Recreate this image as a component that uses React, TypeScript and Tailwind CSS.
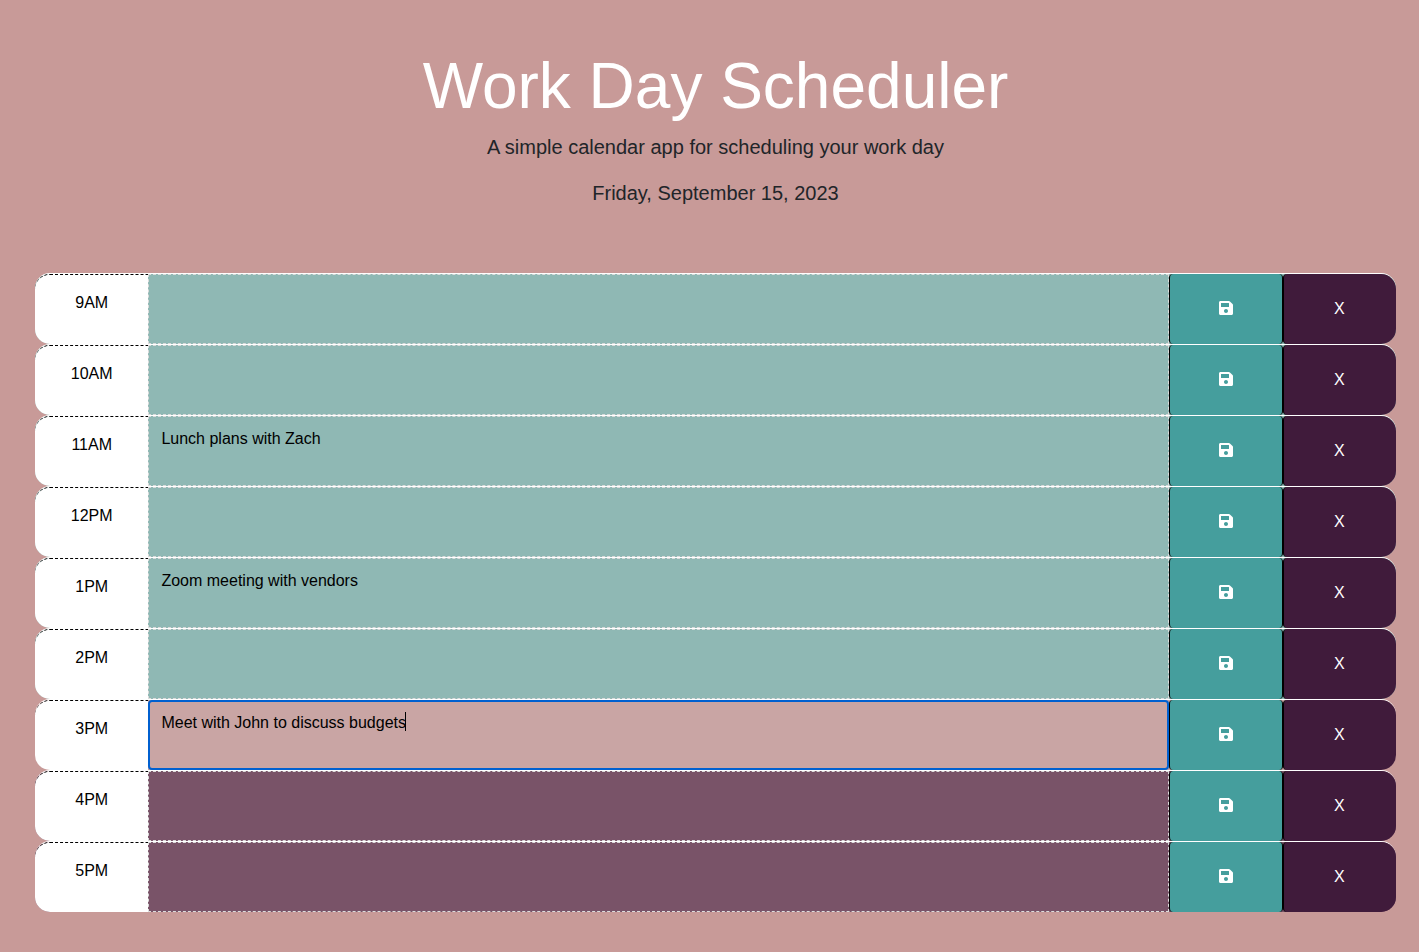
import { useState } from 'react';
import { FaSave } from 'react-icons/fa';

type Period = 'past' | 'present' | 'future';

interface Slot {
  hour: string;
  period: Period;
  text: string;
}

const slots: Slot[] = [
  { hour: '9AM', period: 'past', text: '' },
  { hour: '10AM', period: 'past', text: '' },
  { hour: '11AM', period: 'past', text: 'Lunch plans with Zach' },
  { hour: '12PM', period: 'past', text: '' },
  { hour: '1PM', period: 'past', text: 'Zoom meeting with vendors' },
  { hour: '2PM', period: 'past', text: '' },
  { hour: '3PM', period: 'present', text: 'Meet with John to discuss budgets' },
  { hour: '4PM', period: 'future', text: '' },
  { hour: '5PM', period: 'future', text: '' },
];

const rowColor: Record<Period, string> = {
  past: 'bg-[#8fb8b4]',
  present: 'bg-[#c9a5a4]',
  future: 'bg-[#795368]',
};

const fieldStyle: Record<Period, string> = {
  past: 'border border-dashed border-[#dcdcdc] px-3 pt-[10px]',
  present: 'rounded-[4px] border-2 border-[#0060d0] px-[11px] pt-[9px]',
  future: 'border border-dashed border-[#dcdcdc] px-3 pt-[10px]',
};

function TimeBlock({ slot }: { slot: Slot }) {
  const [text, setText] = useState(slot.text);
  const id = `slot-${slot.hour}`;

  return (
    <li
      className={`grid h-[71px] grid-cols-12 rounded-[15px] border-t border-white ${rowColor[slot.period]}`}
    >
      <label
        htmlFor={id}
        className="rounded-l-[15px] border-t border-dashed border-black bg-white pt-4 text-center"
      >
        {slot.hour}
      </label>
      <div className="relative col-span-9 flex">
        <textarea
          id={id}
          value={text}
          onChange={(event) => setText(event.target.value)}
          className={`block h-full w-full resize-none bg-transparent text-black caret-transparent outline-none ${fieldStyle[slot.period]}`}
        />
        {slot.period === 'present' && (
          <span className="pointer-events-none absolute top-3 left-[257px] h-[19px] w-px bg-black" />
        )}
      </div>
      <button
        type="button"
        aria-label={`Save ${slot.hour}`}
        className="flex items-center justify-center rounded-[4px] border-x border-black bg-[#459e9d] pb-[2px] text-white"
      >
        <FaSave aria-hidden="true" />
      </button>
      <button
        type="button"
        aria-label={`Clear ${slot.hour}`}
        onClick={() => setText('')}
        className="rounded-l-[4px] rounded-r-[15px] border-l border-black bg-[#401b3b] pr-px text-white"
      >
        X
      </button>
    </li>
  );
}

export default function App() {
  return (
    <div className="min-h-screen bg-[#c89a98] pt-12 pr-[23px] pb-10 pl-[35px] font-['Liberation_Sans',Arial,sans-serif] text-base text-black">
      <header className="flex flex-col items-center pb-[65px] text-center text-[#212529]">
        <h1 className="text-[64px] leading-[76px] text-white">Work Day Scheduler</h1>
        <p className="mt-2 text-xl leading-[30px] font-light">
          A simple calendar app for scheduling your work day
        </p>
        <p className="mt-4 text-xl leading-[30px] font-light">Friday, September 15, 2023</p>
      </header>
      <main>
        <ul>
          {slots.map((slot) => (
            <TimeBlock key={slot.hour} slot={slot} />
          ))}
        </ul>
      </main>
    </div>
  );
}
